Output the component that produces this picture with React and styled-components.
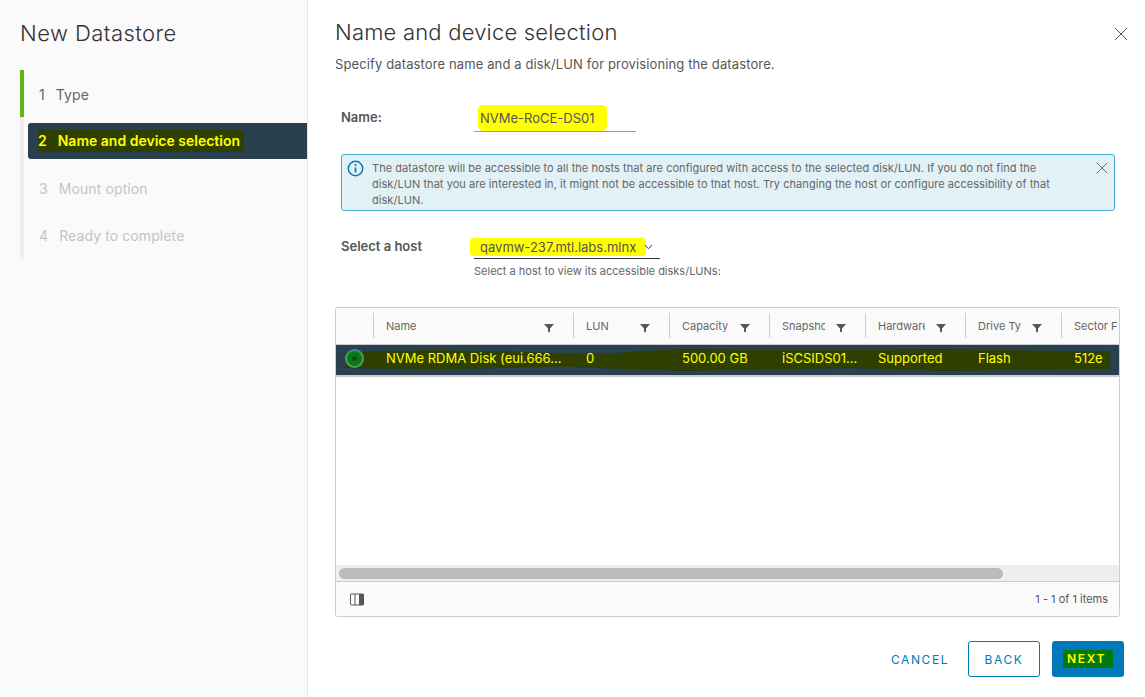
import React from "react";
import styled, { createGlobalStyle } from "styled-components";

const FONT = `"Inter", "Liberation Sans", sans-serif`;

const columns = [
  { title: "Name", value: "NVMe RDMA Disk (eui.666...", width: 200 },
  { title: "LUN", value: "0", width: 96 },
  { title: "Capacity", value: "500.00 GB", width: 100 },
  { title: "Snapshot", value: "iSCSIDS01...", width: 96 },
  { title: "Hardware", value: "Supported", width: 100 },
  { title: "Drive Type", value: "Flash", width: 96 },
  { title: "Sector Format", value: "512e", width: 96 },
];

const steps = [
  { id: 1, label: "Type", state: "done" },
  { id: 2, label: "Name and device selection", state: "active" },
  { id: 3, label: "Mount option", state: "todo" },
  { id: 4, label: "Ready to complete", state: "todo" },
];

const CloseIcon = ({ size }) => (
  <svg width={size} height={size} viewBox="0 0 14 14" fill="none" stroke="#565656" strokeWidth="1">
    <path d="M1 1l12 12M13 1L1 13" />
  </svg>
);

const FilterIcon = () => (
  <svg width="10" height="10" viewBox="0 0 10 10" fill="#565656">
    <path d="M0 1h10L6 5.4V9.6L4 8.4V5.4z" />
  </svg>
);

export default function App() {
  return (
    <>
      <GlobalStyle />
      <Page>
        <Sidebar>
          <WizardTitle>New Datastore</WizardTitle>
          <StepList>
            {steps.map((s) => (
              <Step key={s.id} $state={s.state}>
                <StepLabel $state={s.state}>
                  <StepInk $state={s.state}>
                    <StepNum>{s.id}</StepNum>
                    {s.label}
                  </StepInk>
                </StepLabel>
              </Step>
            ))}
          </StepList>
        </Sidebar>

        <Main>
          <TitleRow>
            <PageTitle>Name and device selection</PageTitle>
            <CloseBtn><CloseIcon size={14} /></CloseBtn>
          </TitleRow>
          <Description>Specify datastore name and a disk/LUN for provisioning the datastore.</Description>

          <NameRow>
            <FieldLabel>Name:</FieldLabel>
            <NameInput><NameMarker>NVMe-RoCE-DS01</NameMarker></NameInput>
          </NameRow>

          <Alert>
            <svg width="17" height="17" viewBox="0 0 17 17" fill="none">
              <circle cx="8.5" cy="8.5" r="7.2" stroke="#0079b8" strokeWidth="1.4" />
              <circle cx="8.5" cy="5" r="1.1" fill="#0079b8" />
              <path d="M8.5 7.5v5" stroke="#0079b8" strokeWidth="1.7" />
            </svg>
            <AlertText>
              The datastore will be accessible to all the hosts that are configured with access to the selected disk/LUN. If you do not find the disk/LUN that you are interested in, it might not be accessible to that host. Try changing the host or configure accessibility of that disk/LUN.
            </AlertText>
            <AlertClose><CloseIcon size={12} /></AlertClose>
          </Alert>

          <HostRow>
            <FieldLabel>Select a host</FieldLabel>
            <HostField>
              <HostSelect>
                <HostMarker>qavmw-237.mtl.labs.mlnx</HostMarker>
                <Chevron width="9" height="6" viewBox="0 0 9 6" fill="none" stroke="#333" strokeWidth="1">
                  <path d="M.8 1l3.7 3.7L8.2 1" />
                </Chevron>
              </HostSelect>
              <HostHelp>Select a host to view its accessible disks/LUNs:</HostHelp>
            </HostField>
          </HostRow>

          <Grid>
            <GridBody>
              <HeaderRow>
                <SelectCell />
                {columns.map((c) => (
                  <HeaderCell key={c.title} $width={c.width}>
                    <HeaderText $width={c.width}>{c.title}</HeaderText>
                    <FilterBtn><FilterIcon /></FilterBtn>
                  </HeaderCell>
                ))}
              </HeaderRow>
              <DataRow>
                <RowInk />
                <SelectCell>
                  <Radio />
                </SelectCell>
                {columns.map((c) => (
                  <DataCell key={c.title} $width={c.width}>{c.value}</DataCell>
                ))}
              </DataRow>
            </GridBody>
            <ScrollTrack><ScrollThumb /></ScrollTrack>
            <GridFooter>
              <svg width="14" height="13" viewBox="0 0 14 13">
                <rect x=".5" y="1" width="13" height="11" rx="1" fill="#fff" stroke="#565656" />
                <path d="M5 1v11" stroke="#565656" />
                <rect x="9" y="1" width="5" height="11" fill="#565656" />
              </svg>
              <ItemCount>1 - 1 of 1 items</ItemCount>
            </GridFooter>
          </Grid>

          <Actions>
            <LinkButton>CANCEL</LinkButton>
            <OutlineButton>BACK</OutlineButton>
            <PrimaryButton><NextInk>NEXT</NextInk></PrimaryButton>
          </Actions>
        </Main>
      </Page>
    </>
  );
}

const GlobalStyle = createGlobalStyle`
  html, body { margin: 0; padding: 0; background: #fff; overflow: hidden; }
  * { box-sizing: border-box; }
  body { font-family: ${FONT}; color: #565656; }
`;

const Page = styled.div`
  display: flex;
  width: 1145px;
  height: 697px;
  overflow: hidden;
`;

const Sidebar = styled.aside`
  width: 308px;
  flex-shrink: 0;
  padding: 20px 0 0 20px;
  background: #fafafa;
  border-right: 1px solid #e3e3e3;
`;

const WizardTitle = styled.h2`
  margin: 0;
  height: 50px;
  font-size: 22px;
  line-height: 26px;
  font-weight: 300;
  letter-spacing: 0.45px;
  color: #333;
`;

const StepList = styled.div`
  display: flex;
  flex-direction: column;
  padding-bottom: 1px;
  border-left: 4px solid #eee;
`;

const Step = styled.div`
  height: 47px;
  display: flex;
  align-items: center;
  ${(p) => p.$state === "done" && `
    margin-left: -4px;
    border-left: 4px solid #60b515;
  `}
  ${(p) => p.$state === "active" && `
    padding-left: 4px;
  `}
`;

const StepLabel = styled.div`
  flex: 1;
  height: 36px;
  display: flex;
  align-items: center;
  padding-left: ${(p) => (p.$state === "active" ? "10px" : "15px")};
  margin-top: ${(p) => (p.$state === "active" ? "1px" : "2px")};
  font-size: 14px;
  letter-spacing: ${(p) => (p.$state === "active" ? "0" : "0.1px")};
  font-weight: ${(p) => (p.$state === "active" ? 600 : 400)};
  color: ${(p) => (p.$state === "active" ? "#ffff00" : p.$state === "done" ? "#666" : "#c4c4c4")};
  ${(p) => p.$state === "active" && `
    background: #29414e;
    border-radius: 3px 0 0 3px;
  `}
`;

const StepInk = styled.span`
  ${(p) => p.$state === "active" && `
    display: inline-block;
    height: 22px;
    line-height: 22px;
    padding: 0 4px 0 0;
    background: #2f3f00;
    border-radius: 4px;
  `}
`;

const StepNum = styled.span`
  margin-right: 11px;
`;

const Main = styled.main`
  flex: 1;
  min-width: 0;
  padding: 18px 21px 0 27px;
`;

const TitleRow = styled.div`
  display: flex;
  align-items: center;
  justify-content: space-between;
  height: 28px;
`;

const PageTitle = styled.h3`
  margin: 0;
  font-size: 22px;
  font-weight: 300;
  letter-spacing: 0.2px;
  color: #333;
`;

const CloseBtn = styled.div`
  display: flex;
  margin: 4px -4px 0 0;
`;

const Description = styled.p`
  margin: 9px 0 0;
  font-size: 13px;
  line-height: 18px;
  letter-spacing: 0.12px;
  color: #565656;
`;

const NameRow = styled.div`
  display: flex;
  align-items: center;
  margin: 29px 0 0 6px;
`;

const FieldLabel = styled.div`
  width: 133px;
  font-size: 13px;
  font-weight: 600;
  color: #565656;
`;

const NameInput = styled.div`
  width: 162px;
  height: 30px;
  padding: 2px 0 0 4px;
  border-bottom: 1px solid #9a9a9a;
  display: flex;
  align-items: center;
`;

const marker = `
  display: inline-block;
  background: #ffff00;
  font-size: 13px;
  line-height: 18px;
  color: #555;
  white-space: nowrap;
`;

const NameMarker = styled.span`
  ${marker}
  padding: 4px 12px 4px 2px;
  border-radius: 5px;
`;

const HostMarker = styled.span`
  ${marker}
  margin: 0 -5px 0 -10px;
  padding: 0 10px;
  border-radius: 4px;
`;

const Chevron = styled.svg`
  position: relative;
  flex-shrink: 0;
`;

const Alert = styled.div`
  display: flex;
  align-items: flex-start;
  width: 774px;
  height: 57px;
  margin: 22px 0 0 6px;
  padding: 5px 6px 0 5px;
  background: #e1f1f6;
  border: 1px solid #49afd9;
  border-radius: 3px;
`;

const AlertText = styled.div`
  width: 690px;
  flex-shrink: 0;
  margin-left: 8px;
  font-size: 11px;
  line-height: 16px;
  letter-spacing: 0.05px;
  color: #666;
`;

const AlertClose = styled.div`
  display: flex;
  margin: 2px 0 0 auto;
`;

const HostRow = styled.div`
  display: flex;
  margin: 24px 0 0 6px;
  ${FieldLabel} { margin-top: 3px; }
`;

const HostField = styled.div`
  display: flex;
  flex-direction: column;
`;

const HostSelect = styled.div`
  width: 186px;
  height: 24px;
  padding-left: 6px;
  display: flex;
  align-items: center;
  gap: 3px;
  border-bottom: 1px solid #333;
`;

const HostHelp = styled.div`
  margin-top: 5px;
  font-size: 11px;
  line-height: 14px;
  color: #666;
`;

const Grid = styled.section`
  width: 785px;
  height: 310px;
  margin-top: 29px;
  display: flex;
  flex-direction: column;
  border: 1px solid #ccc;
  border-radius: 3px;
  overflow: hidden;
`;

const GridBody = styled.div`
  flex: 1;
  min-height: 0;
  overflow: hidden;
`;

const HeaderRow = styled.div`
  display: flex;
  width: 1000px;
  height: 37px;
  padding-top: 5px;
  background: #fafafa;
  border-bottom: 1px solid #ccc;
`;

const SelectCell = styled.div`
  width: 37px;
  flex-shrink: 0;
  position: relative;
  z-index: 1;
  display: flex;
  align-items: center;
  justify-content: center;
`;

const HeaderCell = styled.div`
  position: relative;
  width: ${(p) => p.$width}px;
  flex-shrink: 0;
  height: 25px;
  padding-left: 12px;
  display: flex;
  align-items: center;
  border-left: 1px solid #ccc;
`;

const HeaderText = styled.div`
  width: ${(p) => p.$width - 53}px;
  overflow: hidden;
  white-space: nowrap;
  font-size: 11px;
  color: #666;
`;

const FilterBtn = styled.div`
  position: absolute;
  right: 19px;
  top: 10px;
  display: flex;
`;

const DataRow = styled.div`
  position: relative;
  display: flex;
  width: 1000px;
  height: 32px;
  padding-bottom: 4px;
  background: #29414e;
  border-bottom: 2px solid #ccc;
`;

const RowInk = styled.div`
  position: absolute;
  left: 9px;
  top: 4px;
  width: 765px;
  height: 22px;
  background: #2f3f00;
  clip-path: polygon(0 14%, 12% 4%, 28% 18%, 34% 22%, 44% 0, 56% 4%, 66% 4%, 78% 0, 100% 12%, 100% 90%, 78% 100%, 66% 86%, 44% 100%, 28% 80%, 12% 92%, 0 86%);
`;

const DataCell = styled.div`
  position: relative;
  width: ${(p) => p.$width}px;
  flex-shrink: 0;
  padding-left: 13px;
  display: flex;
  align-items: center;
  font-size: 13px;
  color: #ffff00;
  white-space: nowrap;
  overflow: hidden;
`;

const Radio = styled.div`
  width: 19px;
  height: 19px;
  border-radius: 50%;
  border: 2px solid #4a9f5e;
  border-top-color: #3f86a8;
  background: radial-gradient(circle, #1d4a10 0 2px, #0b7a12 3px);
`;

const ScrollTrack = styled.div`
  height: 17px;
  padding: 3px 0 0 3px;
  background: #eee;
  border-bottom: 1px solid #ccc;
`;

const ScrollThumb = styled.div`
  width: 664px;
  height: 11px;
  background: #bbb;
  border-radius: 6px;
`;

const GridFooter = styled.div`
  height: 34px;
  padding: 0 11px 0 14px;
  display: flex;
  align-items: center;
  justify-content: space-between;
  background: #fafafa;
`;

const ItemCount = styled.div`
  font-size: 11px;
  color: #565656;
`;

const Actions = styled.div`
  display: flex;
  align-items: center;
  justify-content: flex-end;
  gap: 12px;
  margin-top: 24px;
`;

const buttonBase = `
  height: 36px;
  width: 72px;
  display: flex;
  align-items: center;
  justify-content: center;
  border-radius: 3px;
  font-size: 12px;
  font-weight: 400;
  letter-spacing: 1.6px;
`;

const LinkButton = styled.div`
  ${buttonBase}
  color: #0079b8;
`;

const OutlineButton = styled.div`
  ${buttonBase}
  color: #0079b8;
  border: 1px solid #0079b8;
`;

const PrimaryButton = styled.div`
  ${buttonBase}
  background: #0079b8;
`;

const NextInk = styled.span`
  height: 18px;
  line-height: 18px;
  padding: 0 7px 0 4px;
  background: #007a10;
  color: #ffff00;
  font-weight: 600;
`;
